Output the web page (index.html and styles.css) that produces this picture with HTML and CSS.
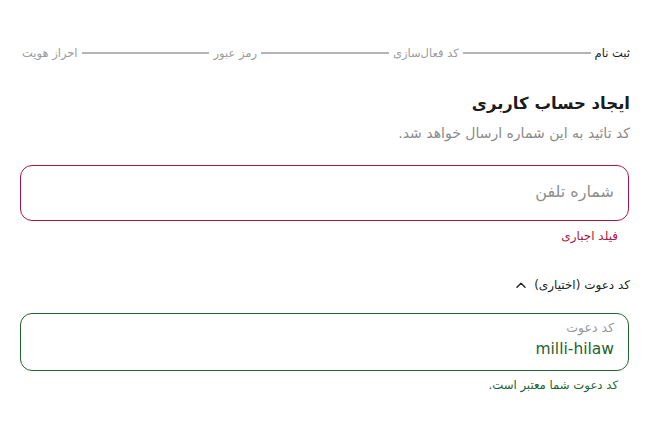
FILE: index.html
```html
<!DOCTYPE html>
<html lang="fa" dir="rtl">
<head>
<meta charset="utf-8">
<link rel="stylesheet" href="styles.css">
</head>
<body>
<main class="page">
  <nav class="stepper">
    <span class="step active">ثبت نام</span>
    <span class="line"></span>
    <span class="step">کد فعال‌سازی</span>
    <span class="line"></span>
    <span class="step">رمز عبور</span>
    <span class="line"></span>
    <span class="step">احراز هویت</span>
  </nav>

  <h1 class="title">ایجاد حساب کاربری</h1>
  <p class="subtitle">کد تائید به این شماره ارسال خواهد شد.</p>

  <div class="field error">
    <span class="placeholder">شماره تلفن</span>
  </div>
  <p class="hint hint-error">فیلد اجباری</p>

  <div class="toggle">
    <span>کد دعوت (اختیاری)</span>
    <svg class="chev" width="10" height="6" viewBox="0 0 10 6"><path d="M1 5.2 L5 1.2 L9 5.2" fill="none" stroke="#222" stroke-width="1.4" stroke-linecap="round" stroke-linejoin="round"/></svg>
  </div>

  <div class="field success">
    <span class="label">کد دعوت</span>
    <span class="value" dir="ltr">milli-hilaw</span>
  </div>
  <p class="hint hint-success">کد دعوت شما معتبر است.</p>
</main>
</body>
</html>
```

FILE: styles.css
```css
* { box-sizing: border-box; }
html, body { margin: 0; background: #fff; }
body { font-family: "DejaVu Sans", sans-serif; color: #1c1c1c; }

.page {
  padding: 45px 17px 0 18px;
  display: flex;
  flex-direction: column;
}

.stepper {
  display: flex;
  align-items: center;
  gap: 4px;
  height: 16px;
  padding-left: 4px;
}
.step { font-size: 11.5px; color: #9c9c9c; white-space: nowrap; }
.step.active { color: #1c1c1c; }
.line { flex: 1; height: 2px; background: #b4b4b4; }

.title {
  margin: 32px 0 0;
  font-size: 16.5px;
  font-weight: bold;
  line-height: 22px;
}
.subtitle {
  margin: 8px 0 0;
  font-size: 14px;
  line-height: 20px;
  color: #8a8a8a;
}

.field {
  margin: 22px 1px 0 2px;
  border-radius: 12px;
  padding: 0 14px;
  display: flex;
  flex-direction: column;
}
.field.error { height: 56px; border: 1.3px solid #a9163f; justify-content: center; }
.placeholder { font-size: 16px; color: #8e8e8e; margin-top: -3px; }

.hint { margin: 7px 12px 0 0; font-size: 12px; line-height: 17px; }
.hint-error { color: #a9163f; }
.hint-success { color: #23632f; margin-top: 6px; font-size: 11.7px; }

.toggle {
  margin-top: 31px;
  display: flex;
  align-items: center;
  gap: 8px;
  font-size: 12px;
  line-height: 18px;
  color: #1c1c1c;
}
.chev { display: block; }

.field.success {
  margin-top: 19px;
  height: 58px;
  border: 1.3px solid #23632f;
  padding-top: 6px;
  gap: 3px;
}
.label { font-size: 12.5px; color: #9a9a9a; line-height: 16px; }
.value { font-size: 15.5px; color: #23632f; line-height: 21px; text-align: right; }
```
